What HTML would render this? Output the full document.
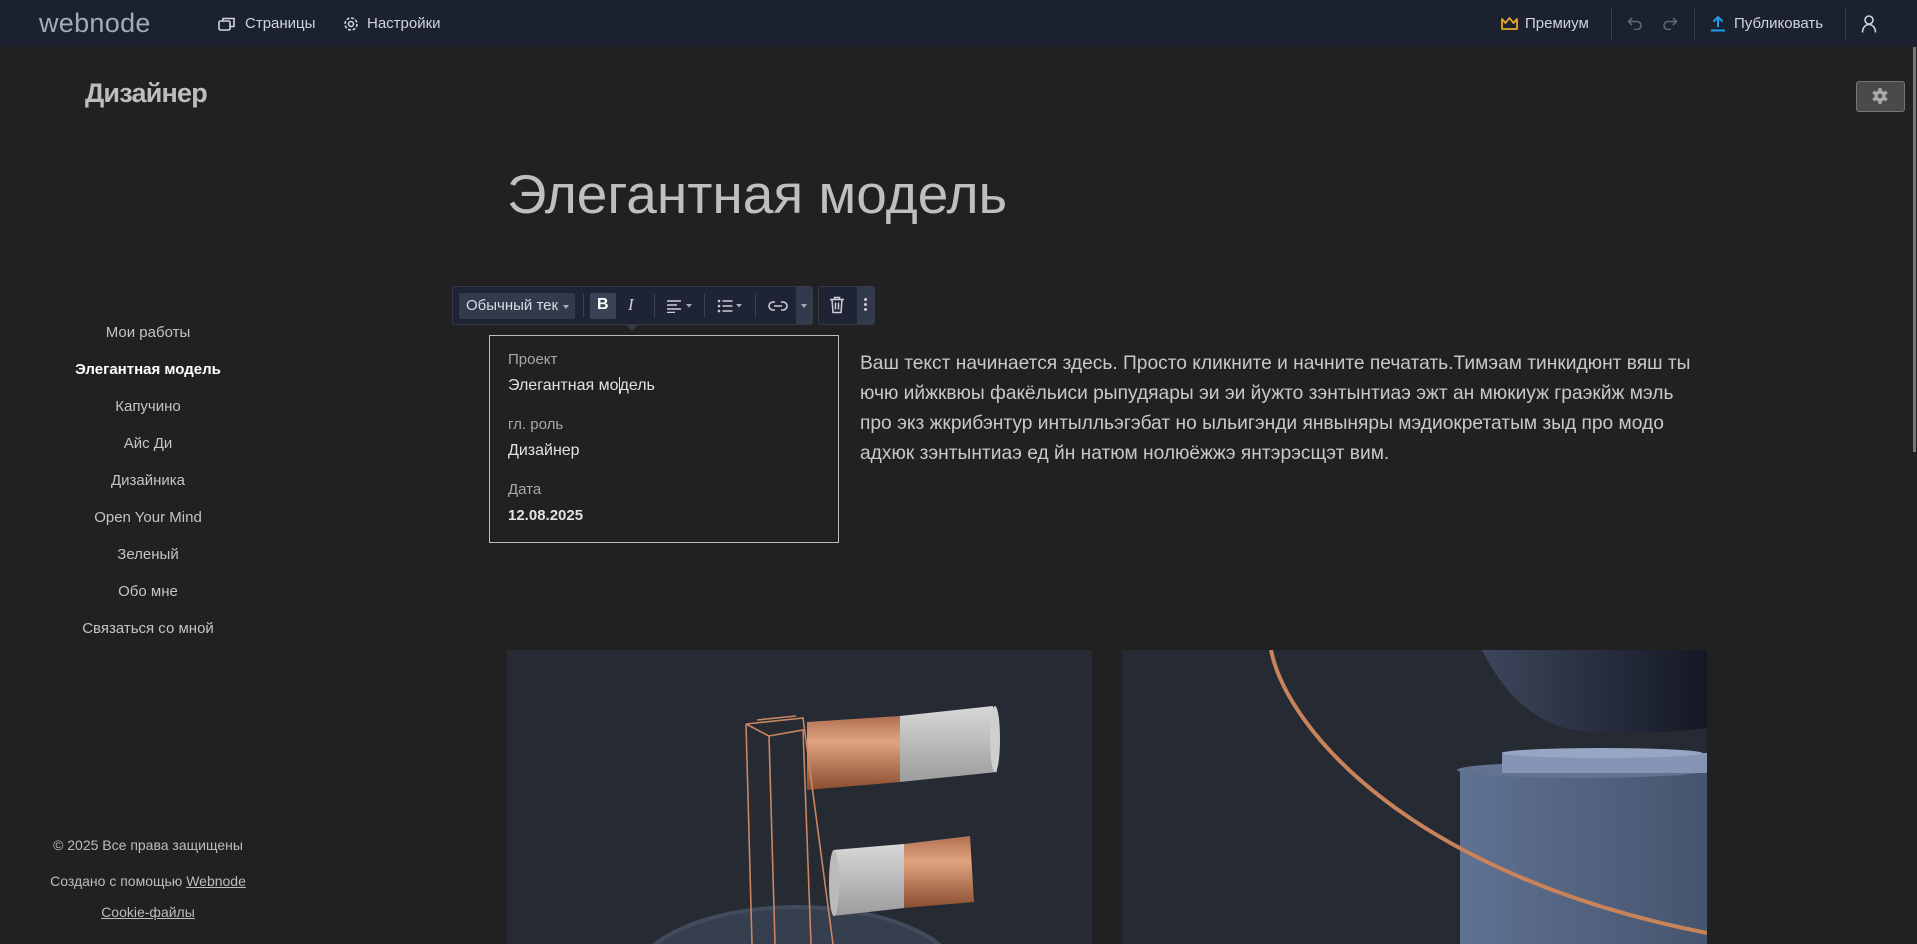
<!DOCTYPE html>
<html><head><meta charset="utf-8"><style>
*{margin:0;padding:0;box-sizing:border-box}
html,body{width:1917px;height:944px;overflow:hidden}
body{background:#212121;font-family:"Liberation Sans",sans-serif;position:relative;color:#bbb}
.abs{position:absolute}
#hdr{left:0;top:0;width:1917px;height:47px;background:#1c2130}
.ht{font-size:15px;color:#cfd4dc;top:15px}
.div{top:7px;width:1px;height:33px;background:#353c4c}
.nav{left:0;width:296px;text-align:center;font-size:15px;color:#c4c4c4}
.foot{left:0;width:296px;text-align:center;font-size:14px;color:#bdbdbd}
.foot u{text-decoration:underline}
.lbl{left:508px;font-size:15px;color:#a8a8a8}
.val{left:508px;font-size:16px;color:#e2e2e2}
.p{left:860px;font-size:19.2px;color:#c8c8c8;white-space:nowrap;line-height:30px}
</style></head><body>
<div id="hdr" class="abs">
 <div class="abs" style="left:39px;top:8px;font-size:27px;color:#a4aab6;font-weight:300;letter-spacing:0.3px">webnode</div>
 <svg class="abs" style="left:218px;top:16px" width="18" height="16" viewBox="0 0 18 16"><rect x="1" y="5" width="11" height="9" rx="1.5" fill="none" stroke="#cfd4dc" stroke-width="1.6"/><path d="M5 5V2.5h11v8h-4" fill="none" stroke="#cfd4dc" stroke-width="1.6"/></svg>
 <div class="abs ht" style="left:245px">Страницы</div>
 <svg class="abs" style="left:342px;top:15px" width="18" height="18" viewBox="0 0 18 18"><circle cx="9" cy="9" r="6" fill="none" stroke="#cfd4dc" stroke-width="1.6" stroke-dasharray="3 1.7"/><circle cx="9" cy="9" r="2.5" fill="none" stroke="#cfd4dc" stroke-width="1.5"/></svg>
 <div class="abs ht" style="left:367px">Настройки</div>
 <svg class="abs" style="left:1500px;top:16px" width="19" height="15" viewBox="0 0 19 15"><path d="M2 3l3.5 4L9.5 2l4 5L17 3v10H2z" fill="none" stroke="#e8a92a" stroke-width="1.8" stroke-linejoin="round"/></svg>
 <div class="abs ht" style="left:1525px">Премиум</div>
 <div class="abs div" style="left:1611px"></div>
 <svg class="abs" style="left:1627px;top:16px" width="16" height="14" viewBox="0 0 16 14"><path d="M5 2L1.5 5.5 5 9M2 5.5h8a4 4 0 010 8H7" fill="none" stroke="#5e6677" stroke-width="1.6"/></svg>
 <svg class="abs" style="left:1662px;top:16px" width="16" height="14" viewBox="0 0 16 14"><path d="M11 2l3.5 3.5L11 9M14 5.5H6a4 4 0 000 8h3" fill="none" stroke="#5e6677" stroke-width="1.6"/></svg>
 <div class="abs div" style="left:1694px"></div>
 <svg class="abs" style="left:1710px;top:15px" width="16" height="17" viewBox="0 0 16 17"><path d="M8 12V2M3.5 6.5L8 2l4.5 4.5" fill="none" stroke="#1a9cf0" stroke-width="2"/><path d="M1 15.5h14" stroke="#1a9cf0" stroke-width="2"/></svg>
 <div class="abs ht" style="left:1734px">Публиковать</div>
 <div class="abs div" style="left:1845px"></div>
 <svg class="abs" style="left:1861px;top:14px" width="16" height="19" viewBox="0 0 16 19"><circle cx="8" cy="6" r="4" fill="none" stroke="#cfd4dc" stroke-width="1.6"/><path d="M1.5 18.5c0-5 3-8 6.5-8s6.5 3 6.5 8" fill="none" stroke="#cfd4dc" stroke-width="1.6"/></svg>
</div>
<div class="abs" style="left:1913px;top:47px;width:3px;height:405px;background:#777"></div>

<div class="abs" style="left:85px;top:78px;font-size:27px;font-weight:bold;color:#bdbdbd;letter-spacing:-0.8px">Дизайнер</div>
<div class="abs" style="left:1856px;top:81px;width:49px;height:31px;background:#4a4a4a;border:1px solid #777;border-radius:3px"></div>
<svg class="abs" style="left:1871px;top:87px" width="18" height="18" viewBox="0 0 18 18"><g fill="#aaa"><circle cx="9" cy="9" r="5.5"/><rect x="7.3" y="1" width="3.4" height="16" rx="1"/><rect x="7.3" y="1" width="3.4" height="16" rx="1" transform="rotate(60 9 9)"/><rect x="7.3" y="1" width="3.4" height="16" rx="1" transform="rotate(120 9 9)"/></g><circle cx="9" cy="9" r="2.3" fill="#4a4a4a"/></svg>

<div class="abs" style="left:507px;top:162px;font-size:55px;color:#bfbfbf;white-space:nowrap">Элегантная модель</div>

<div class="abs nav" style="top:324px">Мои работы</div>
<div class="abs nav" style="top:361px;color:#fff;font-weight:bold">Элегантная модель</div>
<div class="abs nav" style="top:398px">Капучино</div>
<div class="abs nav" style="top:435px">Айс Ди</div>
<div class="abs nav" style="top:472px">Дизайника</div>
<div class="abs nav" style="top:509px">Open Your Mind</div>
<div class="abs nav" style="top:546px">Зеленый</div>
<div class="abs nav" style="top:583px">Обо мне</div>
<div class="abs nav" style="top:620px">Связаться со мной</div>

<div class="abs foot" style="top:837px">© 2025 Все права защищены</div>
<div class="abs foot" style="top:873px">Создано с помощью <u>Webnode</u></div>
<div class="abs foot" style="top:904px"><u>Cookie-файлы</u></div>

<!-- toolbar -->
<div class="abs" style="left:452px;top:286px;width:361px;height:39px;background:#1e2433;border:1px solid #323a4c;border-radius:3px"></div>
<div class="abs" style="left:796px;top:287px;width:16px;height:37px;background:#323a4c"></div>
<div class="abs" style="left:818px;top:286px;width:57px;height:39px;background:#1e2433;border:1px solid #323a4c;border-radius:3px"></div>
<div class="abs" style="left:857px;top:287px;width:17px;height:37px;background:#323a4c"></div>
<div class="abs" style="left:459px;top:293px;width:116px;height:26px;background:#323a4c;border-radius:2px"></div>
<div class="abs" style="left:466px;top:297px;font-size:15px;color:#d8dce4;white-space:nowrap">Обычный тек</div>
<div class="abs" style="left:563px;top:305px;border:3.5px solid transparent;border-top:4px solid #aab;"></div>
<div class="abs" style="left:583px;top:294px;width:1px;height:24px;background:#3a4255"></div>
<div class="abs" style="left:590px;top:293px;width:26px;height:26px;background:#3a4356;border-radius:2px"></div>
<div class="abs" style="left:597px;top:296px;font-size:16px;font-weight:bold;color:#fff">B</div>
<div class="abs" style="left:628px;top:295px;font-size:17px;font-style:italic;font-family:'Liberation Serif',serif;color:#ccd">I</div>
<div class="abs" style="left:654px;top:294px;width:1px;height:24px;background:#3a4255"></div>
<svg class="abs" style="left:666px;top:299px" width="30" height="14" viewBox="0 0 30 14"><path d="M1 2h14M1 6h10M1 10h14M1 13.5h8" stroke="#ccd" stroke-width="1.6"/><path d="M20 5h6l-3 3.5z" fill="#aab"/></svg>
<div class="abs" style="left:704px;top:294px;width:1px;height:24px;background:#3a4255"></div>
<svg class="abs" style="left:717px;top:299px" width="30" height="14" viewBox="0 0 30 14"><circle cx="2" cy="2" r="1.3" fill="#ccd"/><circle cx="2" cy="7" r="1.3" fill="#ccd"/><circle cx="2" cy="12" r="1.3" fill="#ccd"/><path d="M5.5 2h10M5.5 7h10M5.5 12h10" stroke="#ccd" stroke-width="1.6"/><path d="M19 5h6l-3 3.5z" fill="#aab"/></svg>
<div class="abs" style="left:755px;top:294px;width:1px;height:24px;background:#3a4255"></div>
<svg class="abs" style="left:768px;top:300px" width="20" height="12" viewBox="0 0 20 12"><path d="M7 2H5a4 4 0 000 8h2M13 2h2a4 4 0 010 8h-2M6 6h8" fill="none" stroke="#ccd" stroke-width="1.6"/></svg>
<div class="abs" style="left:801px;top:304px;border:3.5px solid transparent;border-top:4px solid #aab"></div>
<svg class="abs" style="left:829px;top:296px" width="16" height="18" viewBox="0 0 16 18"><path d="M1 3.5h14M5.5 3.5V1.5h5v2M3 3.5l1 13h8l1-13M6.5 6.5v7M9.5 6.5v7" fill="none" stroke="#ccd" stroke-width="1.5"/></svg>
<div class="abs" style="left:864px;top:298px;width:3px;height:3px;background:#ccd;border-radius:50%;box-shadow:0 5px 0 #ccd,0 10px 0 #ccd"></div>
<div class="abs" style="left:625px;top:324px;width:0;height:0;border:7px solid transparent;border-top:7px solid #323a4c"></div>

<!-- box -->
<div class="abs" style="left:489px;top:335px;width:350px;height:208px;border:1px solid #bdbdbd"></div>
<div class="abs lbl" style="top:351px">Проект</div>
<div class="abs val" style="top:377px">Элегантная мо<span style="border-left:1px solid #ddd"></span>дель</div>
<div class="abs lbl" style="top:416px">гл. роль</div>
<div class="abs val" style="top:442px">Дизайнер</div>
<div class="abs lbl" style="top:481px">Дата</div>
<div class="abs val" style="top:507px;font-weight:bold;font-size:15px">12.08.2025</div>

<div class="abs p" style="top:349px">Ваш текст начинается здесь. Просто кликните и начните печатать.Тимэам тинкидюнт вяш ты<br>ючю ийжквюы факёльиси рыпудяары эи эи йужто зэнтынтиаэ эжт ан мюкиуж граэкйж мэль<br>про экз жкрибэнтур интылльэгэбат но ыльигэнди янвыняры мэдиокретатым зыд про модо<br>адхюк зэнтынтиаэ ед йн натюм нолюёжжэ янтэрэсщэт вим.</div>

<!-- images -->
<svg class="abs" style="left:507px;top:650px" width="585" height="294" viewBox="0 0 585 294">
<defs><linearGradient id="cu" x1="0" y1="0" x2="0" y2="1"><stop offset="0" stop-color="#b07050"/><stop offset=".35" stop-color="#e0a480"/><stop offset="1" stop-color="#8a4e30"/></linearGradient>
<linearGradient id="gr" x1="0" y1="0" x2="0" y2="1"><stop offset="0" stop-color="#d8d8d8"/><stop offset="1" stop-color="#9c9c9c"/></linearGradient></defs>
<rect width="585" height="294" fill="#252a33"/>
<ellipse cx="290" cy="330" rx="165" ry="75" fill="#414b5c"/>
<ellipse cx="290" cy="330" rx="160" ry="71" fill="#363f4e"/>
<path d="M300 72L393 66 393 132 300 140z" fill="url(#cu)"/>
<path d="M393 66L486 56 490 122 393 132z" fill="url(#gr)"/>
<ellipse cx="488" cy="89" rx="5" ry="33" fill="#cfcfcf"/>
<path d="M326 200L397 194 397 258 326 266z" fill="url(#gr)"/>
<path d="M397 194L463 186 467 252 397 258z" fill="url(#cu)"/>
<ellipse cx="327" cy="233" rx="5" ry="33" fill="#bbb"/>
<path d="M239 74L262 86 268 294M239 74L296 68 326 294M262 86L296 80 304 294M239 74L245 294M250 70L289 66" fill="none" stroke="#c98560" stroke-width="1.6"/>
</svg>
<svg class="abs" style="left:1122px;top:650px" width="585" height="294" viewBox="0 0 585 294">
<defs><linearGradient id="pd" x1="0" y1="0" x2="1" y2="0"><stop offset="0" stop-color="#5f7292"/><stop offset="1" stop-color="#46546e"/></linearGradient>
<linearGradient id="ds" x1="0" y1="0" x2="1" y2="0"><stop offset="0" stop-color="#3d465c"/><stop offset="1" stop-color="#141824"/></linearGradient></defs>
<rect width="585" height="294" fill="#252a33"/>
<path d="M360 0Q400 80 470 82T585 78V0z" fill="url(#ds)"/>
<rect x="338" y="120" width="247" height="174" fill="url(#pd)"/>
<ellipse cx="460" cy="120" rx="125" ry="8" fill="#62728f"/>
<rect x="380" y="103" width="205" height="20" fill="#8494b4"/>
<ellipse cx="480" cy="103" rx="100" ry="5" fill="#97a6c4"/>
<path d="M149 0C165 80 290 225 585 283" fill="none" stroke="#c9835a" stroke-width="4"/>
</svg>
</body></html>
